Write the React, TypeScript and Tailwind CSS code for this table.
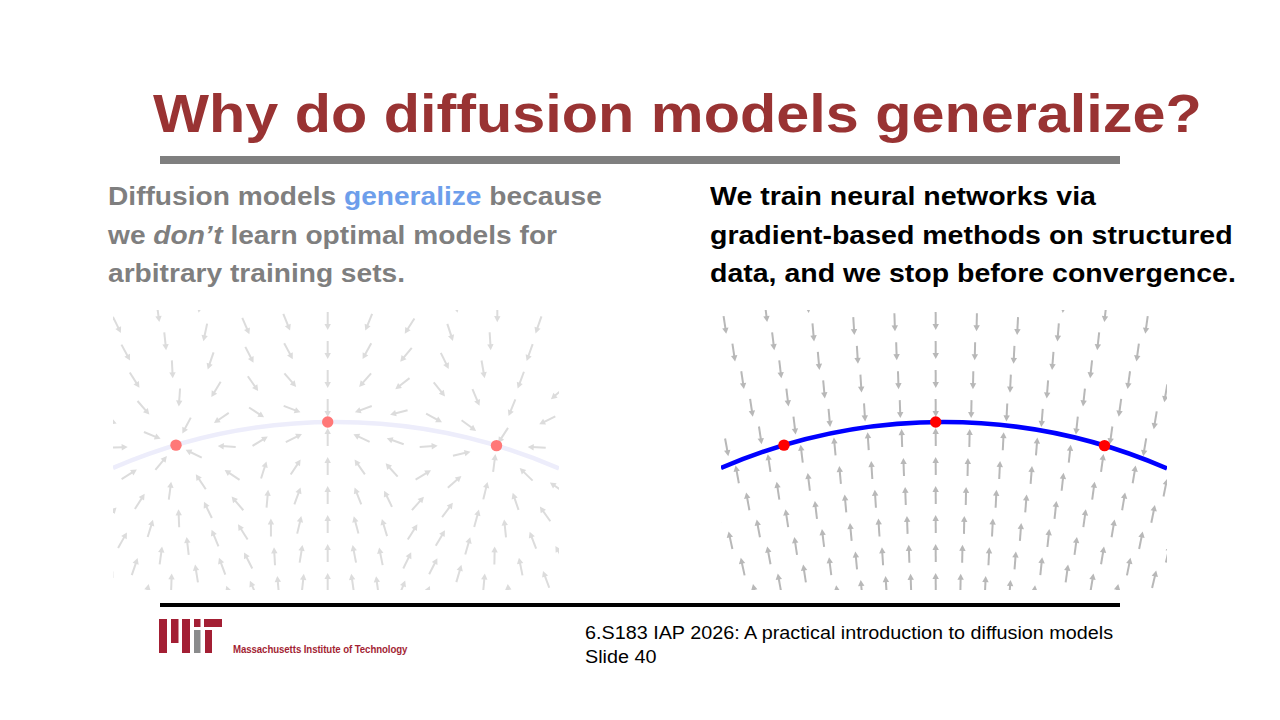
import React from 'react';

// Plot geometry, in local pixels of one 446x280 panel.
const W = 446;
const H = 280;
const GRID_CX = 214.7;
const CY = 673;
const CURVE_CX = 222.5;
const R = 561;
const ROW_STEP = 29;
const ANGLE_STEP = 0.062;

const curveY = (x: number) => CY - Math.sqrt(R * R - (x - CURVE_CX) * (x - CURVE_CX));
const DOTS: [number, number][] = [63, 214.7, 383.5].map((x) => [x, curveY(x)]);

interface Arrow {
  x: number;
  y: number;
  ux: number;
  uy: number;
}

function gridPoints() {
  const pts: { x: number; y: number }[] = [];
  for (let j = -2; j <= 11; j++) {
    const r = 401 + ROW_STEP * j;
    for (let k = -14; k <= 14; k++) {
      const th = k * ANGLE_STEP;
      const x = GRID_CX + r * Math.sin(th);
      const y = CY - r * Math.cos(th);
      if (x < -12 || x > W + 12 || y < -12 || y > H + 12) continue;
      pts.push({ x, y });
    }
  }
  return pts;
}

// memorised field: pulled toward the nearest training point
function memorisedField(): Arrow[] {
  const s2 = 2 * 38 * 38;
  return gridPoints().map(({ x, y }) => {
    const d2 = DOTS.map(([px, py]) => (px - x) ** 2 + (py - y) ** 2);
    const m = Math.min(...d2);
    let vx = 0;
    let vy = 0;
    let wsum = 0;
    DOTS.forEach(([px, py], i) => {
      const w = Math.exp(-(d2[i] - m) / s2);
      vx += w * (px - x);
      vy += w * (py - y);
      wsum += w;
    });
    vx /= wsum;
    vy /= wsum;
    const n = Math.hypot(vx, vy) || 1;
    return { x, y, ux: vx / n, uy: vy / n };
  });
}

// generalising field: pulled onto the curve, mostly vertical
function curveField(): Arrow[] {
  return gridPoints().map(({ x, y }) => {
    const ox = (x - CURVE_CX) * 0.45;
    const oy = y - CY;
    const d = Math.hypot(x - CURVE_CX, oy);
    const sign = d > R ? -1 : 1;
    const n = Math.hypot(ox, oy);
    return { x, y, ux: (sign * ox) / n, uy: (sign * oy) / n };
  });
}

function ArrowGlyph({ a, len, color }: { a: Arrow; len: number; color: string }) {
  const tx = a.x - (a.ux * len) / 2;
  const ty = a.y - (a.uy * len) / 2;
  const px = a.x + (a.ux * len) / 2;
  const py = a.y + (a.uy * len) / 2;
  const head = 6;
  const half = 3.2;
  const bx = px - a.ux * head;
  const by = py - a.uy * head;
  const nx = -a.uy;
  const ny = a.ux;
  return (
    <g>
      <line x1={tx} y1={ty} x2={px - a.ux * 4} y2={py - a.uy * 4} stroke={color} strokeWidth={2} />
      <polygon
        points={`${px},${py} ${bx + nx * half},${by + ny * half} ${bx - nx * half},${by - ny * half}`}
        fill={color}
      />
    </g>
  );
}

function FieldPlot({
  arrows,
  arrowColor,
  curveColor,
  dotColor,
}: {
  arrows: Arrow[];
  arrowColor: string;
  curveColor: string;
  dotColor: string;
}) {
  const d = `M 0 ${curveY(0)} A ${R} ${R} 0 0 1 ${W} ${curveY(W)}`;
  return (
    <svg width={W} height={H} viewBox={`0 0 ${W} ${H}`} className="block shrink-0">
      {arrows.map((a, i) => (
        <ArrowGlyph key={i} a={a} len={18} color={arrowColor} />
      ))}
      <path d={d} fill="none" stroke={curveColor} strokeWidth={4.5} />
      {DOTS.map(([x, y], i) => (
        <circle key={i} cx={x} cy={y} r={5.7} fill={dotColor} />
      ))}
    </svg>
  );
}

function MitLogo() {
  return (
    <div className="flex items-end">
      <svg width={64} height={34} viewBox="0 0 64 34" className="block">
        <rect x={0} y={0} width={8} height={34} fill="#a31f34" />
        <rect x={12} y={0} width={7.5} height={24} fill="#a31f34" />
        <rect x={23} y={0} width={8} height={34} fill="#a31f34" />
        <rect x={35} y={0} width={6.5} height={8} fill="#a31f34" />
        <rect x={35} y={11} width={6.5} height={23} fill="#8a8b8c" />
        <rect x={45} y={0} width={18} height={8} fill="#a31f34" />
        <rect x={46} y={11} width={7} height={23} fill="#a31f34" />
      </svg>
      <span className="ml-[10px] mb-[-3px] inline-block origin-left scale-x-[0.84] whitespace-nowrap text-[11.5px] font-bold leading-none tracking-[-0.1px] text-[#a31f34]">
        Massachusetts Institute of Technology
      </span>
    </div>
  );
}

const memorised = memorisedField();
const generalised = curveField();

export default function App() {
  return (
    <div className="h-[720px] w-[1280px] overflow-hidden bg-white font-['Liberation_Sans',Arial,sans-serif]">
      <div className="pl-[153px] pt-[87px]">
        <h1 className="inline-block origin-left scale-x-[1.12] whitespace-nowrap text-[53px] font-bold leading-[53px] text-[#993333]">
          Why do diffusion models generalize?
        </h1>
      </div>
      <div className="ml-[160px] mt-[16px] h-[8px] w-[960px] bg-[#7f7f7f]" />

      <div className="mt-[13px] flex">
        <div className="ml-[108px] w-[602px] text-[25px] font-bold leading-[38.5px] text-[#7f7f7f]">
          <div className="origin-left scale-x-[1.125] whitespace-nowrap">
            Diffusion models <span className="text-[#6d9eeb]">generalize</span> because
          </div>
          <div className="origin-left scale-x-[1.125] whitespace-nowrap">
            we <em>don’t</em> learn optimal models for
          </div>
          <div className="origin-left scale-x-[1.125] whitespace-nowrap">arbitrary training sets.</div>
        </div>
        <div className="text-[25px] font-bold leading-[38.5px] text-black">
          <div className="origin-left scale-x-[1.14] whitespace-nowrap">We train neural networks via</div>
          <div className="origin-left scale-x-[1.14] whitespace-nowrap">gradient-based methods on structured</div>
          <div className="origin-left scale-x-[1.14] whitespace-nowrap">data, and we stop before convergence.</div>
        </div>
      </div>

      <div className="ml-[113px] mt-[17px] flex gap-[162px]">
        <FieldPlot arrows={memorised} arrowColor="#dcdcdc" curveColor="#ededfb" dotColor="#ff7878" />
        <FieldPlot arrows={generalised} arrowColor="#b8b8b8" curveColor="#0000ff" dotColor="#ff0000" />
      </div>

      <div className="ml-[160px] mt-[13px] h-[4px] w-[960px] bg-black" />

      <div className="mt-[12px] flex items-start pl-[159px]">
        <div className="w-[426px]">
          <MitLogo />
        </div>
        <div className="mt-[2px] text-[17.5px] leading-[24px] text-black">
          <div className="origin-left scale-x-[1.13] whitespace-nowrap">
            6.S183 IAP 2026: A practical introduction to diffusion models
          </div>
          <div className="origin-left scale-x-[1.13] whitespace-nowrap">Slide 40</div>
        </div>
      </div>
    </div>
  );
}
